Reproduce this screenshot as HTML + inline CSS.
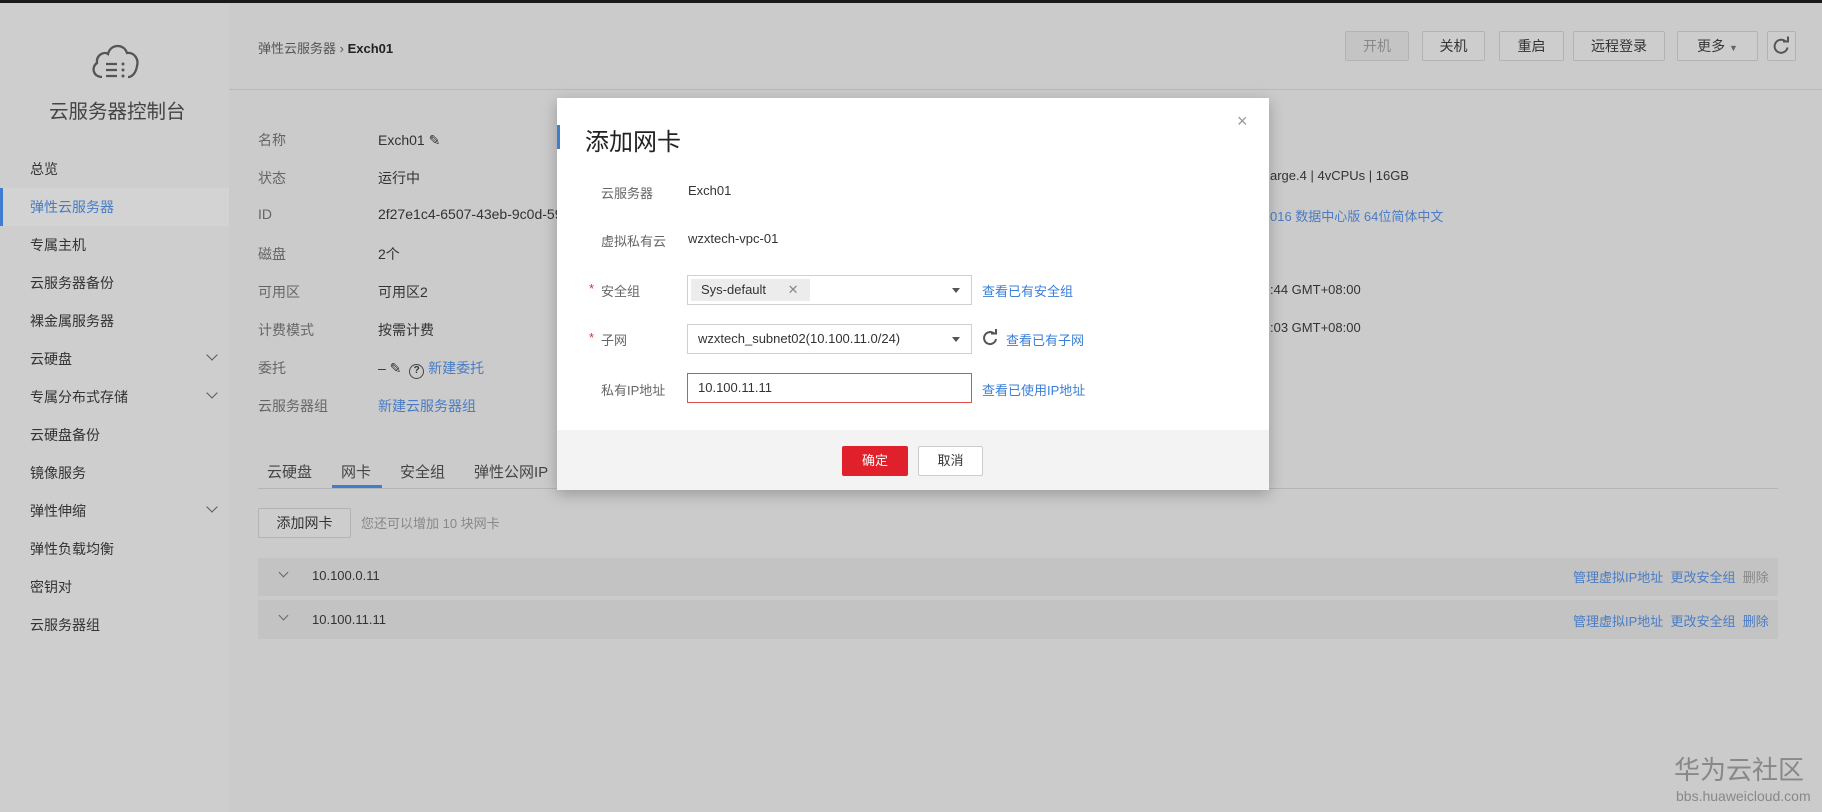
<!DOCTYPE html>
<html><head><meta charset="utf-8"><style>
*{margin:0;padding:0;box-sizing:border-box}
body{width:1822px;height:812px;overflow:hidden;background:#cbcbcb;font-family:"Liberation Sans","Noto Sans CJK SC",sans-serif;font-size:14px;color:#333;position:relative}
.a{position:absolute;white-space:nowrap}
.lbl{color:#666}
.link{color:#4a7cc4}
.btn{position:absolute;border:1px solid #b3b3b3;background:#cdcdcd;text-align:center;color:#333;font-size:14px;border-radius:2px}
.nav{position:absolute;left:30px;color:#333;font-size:14px}
.chev{position:absolute;left:208px;width:8px;height:8px;border-right:1.5px solid #555;border-bottom:1.5px solid #555;transform:rotate(45deg)}
.m{color:#333}
.inp{position:absolute;left:687px;width:285px;height:30px;border:1px solid #cfcfcf;background:#fff}
.tri{position:absolute;right:11px;top:12px;width:0;height:0;border-left:4px solid transparent;border-right:4px solid transparent;border-top:5px solid #555}
.mlink{color:#3a7fd8}
</style></head><body>
<div class="a" style="left:0;top:0;width:1822px;height:3px;background:#1a1a1a"></div>
<div class="a" style="left:0;top:3px;width:229px;height:809px;background:#cecece"></div>
<svg class="a" style="left:85px;top:37px" width="60" height="44" viewBox="0 0 54 44"><path d="M14 40 C5 40 3 30 9 26 C8 18 16 14 20 17 C22 7 36 6 39 16 C46 15 51 22 49 29 C48 36 44 40 40 40" fill="none" stroke="#555" stroke-width="2.3"/><path d="M18 27h11M18 33h11M18 39h11" stroke="#555" stroke-width="2.3"/><circle cx="35" cy="27" r="1.5" fill="#555"/><circle cx="35" cy="33" r="1.5" fill="#555"/><circle cx="35" cy="39" r="1.5" fill="#555"/></svg>
<div class="a" style="left:49px;top:95px;font-size:19.5px;color:#444">云服务器控制台</div>
<div class="nav" style="top:159px">总览</div>
<div class="a" style="left:0;top:188px;width:229px;height:38px;background:#d3d3d3"></div>
<div class="a" style="left:0;top:188px;width:3px;height:38px;background:#3f7dd0"></div>
<div class="nav" style="top:197px;color:#4a7cc4">弹性云服务器</div>
<div class="nav" style="top:235px">专属主机</div>
<div class="nav" style="top:273px">云服务器备份</div>
<div class="nav" style="top:311px">裸金属服务器</div>
<div class="nav" style="top:349px">云硬盘</div><div class="chev" style="top:351px"></div>
<div class="nav" style="top:387px">专属分布式存储</div><div class="chev" style="top:389px"></div>
<div class="nav" style="top:425px">云硬盘备份</div>
<div class="nav" style="top:463px">镜像服务</div>
<div class="nav" style="top:501px">弹性伸缩</div><div class="chev" style="top:503px"></div>
<div class="nav" style="top:539px">弹性负载均衡</div>
<div class="nav" style="top:577px">密钥对</div>
<div class="nav" style="top:615px">云服务器组</div>
<div class="a" style="left:258px;top:38px;font-size:13px;color:#555">弹性云服务器 › <b style="color:#222">Exch01</b></div>
<div class="a" style="left:229px;top:89px;width:1593px;height:1px;background:#b8b8b8"></div>
<div class="btn" style="left:1345px;top:31px;width:64px;height:30px;line-height:28px;color:#888;background:#c4c4c4">开机</div>
<div class="btn" style="left:1422px;top:31px;width:63px;height:30px;line-height:28px">关机</div>
<div class="btn" style="left:1499px;top:31px;width:65px;height:30px;line-height:28px">重启</div>
<div class="btn" style="left:1573px;top:31px;width:92px;height:30px;line-height:28px">远程登录</div>
<div class="btn" style="left:1677px;top:31px;width:81px;height:30px;line-height:28px">更多 <span style="font-size:9px;color:#666">▼</span></div>
<div class="btn" style="left:1767px;top:31px;width:29px;height:30px"><svg width="27" height="28" viewBox="0 0 27 28"><path d="M18 10 A6.5 6.5 0 1 0 19.5 15.5" fill="none" stroke="#555" stroke-width="2"/><path d="M15 9.5 L20 9.5 L20 4.5" fill="none" stroke="#555" stroke-width="2"/></svg></div>
<div class="a lbl" style="left:258px;top:130px">名称</div><div class="a m" style="left:378px;top:132px">Exch01 ✎</div>
<div class="a lbl" style="left:258px;top:168px">状态</div><div class="a m" style="left:378px;top:168px">运行中</div>
<div class="a lbl" style="left:258px;top:206px">ID</div><div class="a m" style="left:378px;top:206px">2f27e1c4-6507-43eb-9c0d-594</div>
<div class="a lbl" style="left:258px;top:244px">磁盘</div><div class="a m" style="left:378px;top:244px">2个</div>
<div class="a lbl" style="left:258px;top:282px">可用区</div><div class="a m" style="left:378px;top:282px">可用区2</div>
<div class="a lbl" style="left:258px;top:320px">计费模式</div><div class="a m" style="left:378px;top:320px">按需计费</div>
<div class="a lbl" style="left:258px;top:358px">委托</div><div class="a m" style="left:378px;top:358px">– ✎ &nbsp;<span style="display:inline-block;width:15px;height:15px;border:1.5px solid #444;border-radius:50%;font-size:10px;text-align:center;line-height:12px;font-weight:bold">?</span> <span class="link">新建委托</span></div>
<div class="a lbl" style="left:258px;top:396px">云服务器组</div><div class="a link" style="left:378px;top:396px">新建云服务器组</div>
<div class="a m" style="left:1270px;top:168px;font-size:13px">arge.4 | 4vCPUs | 16GB</div>
<div class="a link" style="left:1270px;top:206px;font-size:13px">016 数据中心版 64位简体中文</div>
<div class="a m" style="left:1270px;top:282px;font-size:13px">:44 GMT+08:00</div>
<div class="a m" style="left:1270px;top:320px;font-size:13px">:03 GMT+08:00</div>
<div class="a" style="left:267px;top:461px;font-size:15px;color:#444">云硬盘</div>
<div class="a" style="left:341px;top:461px;font-size:15px;color:#444">网卡</div>
<div class="a" style="left:332px;top:485px;width:50px;height:3px;background:#3f7dd0"></div>
<div class="a" style="left:400px;top:461px;font-size:15px;color:#444">安全组</div>
<div class="a" style="left:474px;top:461px;font-size:15px;color:#444">弹性公网IP</div>
<div class="a" style="left:258px;top:488px;width:1520px;height:1px;background:#b5b5b5"></div>
<div class="btn" style="left:258px;top:508px;width:93px;height:30px;line-height:28px">添加网卡</div>
<div class="a" style="left:361px;top:513px;color:#888;font-size:13px">您还可以增加 10 块网卡</div>
<div class="a" style="left:258px;top:558px;width:1520px;height:38px;background:#c3c3c3"></div>
<div class="a" style="left:258px;top:600px;width:1520px;height:39px;background:#c3c3c3"></div>
<div class="a" style="left:280px;top:569px;width:7px;height:7px;border-right:1.5px solid #666;border-bottom:1.5px solid #666;transform:rotate(45deg)"></div>
<div class="a" style="left:280px;top:612px;width:7px;height:7px;border-right:1.5px solid #666;border-bottom:1.5px solid #666;transform:rotate(45deg)"></div>
<div class="a m" style="left:312px;top:568px;font-size:13px">10.100.0.11</div>
<div class="a m" style="left:312px;top:612px;font-size:13px">10.100.11.11</div>
<div class="a link" style="left:1573px;top:567px;font-size:13px">管理虚拟IP地址 &nbsp;更改安全组 &nbsp;<span style="color:#888">删除</span></div>
<div class="a link" style="left:1573px;top:611px;font-size:13px">管理虚拟IP地址 &nbsp;更改安全组 &nbsp;删除</div>
<div class="a" style="left:1674px;top:750px;font-size:26px;color:#888;letter-spacing:0px">华为云社区</div>
<div class="a" style="left:1676px;top:788px;font-size:14px;color:#888">bbs.huaweicloud.com</div>
<div class="a" style="left:557px;top:98px;width:712px;height:392px;background:#fff;box-shadow:0 4px 14px rgba(0,0,0,.25)"></div>
<div class="a" style="left:557px;top:430px;width:712px;height:60px;background:#f3f3f3"></div>
<div class="a" style="left:557px;top:125px;width:3px;height:24px;background:#3f7dd0"></div>
<div class="a" style="left:585px;top:122px;font-size:24px;color:#222">添加网卡</div>
<div class="a" style="left:1237px;top:111px;font-size:18px;color:#999">×</div>
<div class="a lbl" style="left:601px;top:183px;font-size:13px">云服务器</div><div class="a m" style="left:688px;top:183px;font-size:13px">Exch01</div>
<div class="a lbl" style="left:601px;top:231px;font-size:13px">虚拟私有云</div><div class="a m" style="left:688px;top:231px;font-size:13px">wzxtech-vpc-01</div>
<div class="a" style="left:589px;top:281px;color:#e03030;font-size:13px">*</div><div class="a lbl" style="left:601px;top:281px;font-size:13px">安全组</div>
<div class="a" style="left:589px;top:330px;color:#e03030;font-size:13px">*</div><div class="a lbl" style="left:601px;top:330px;font-size:13px">子网</div>
<div class="a lbl" style="left:601px;top:380px;font-size:13px">私有IP地址</div>
<div class="inp" style="top:275px"><div class="a" style="left:3px;top:3px;width:119px;height:22px;background:#ececec;font-size:13px;line-height:22px;padding-left:10px;color:#333">Sys-default <span style="color:#888;margin-left:18px">✕</span></div><div class="tri"></div></div>
<div class="inp" style="top:324px"><div class="a" style="left:10px;top:6px;font-size:13px;color:#333">wzxtech_subnet02(10.100.11.0/24)</div><div class="tri"></div></div>
<div class="inp" style="top:373px;border-color:#e05050"><div class="a" style="left:10px;top:6px;font-size:13px;color:#333">10.100.11.11</div></div>
<div class="a mlink" style="left:982px;top:281px;font-size:13px">查看已有安全组</div>
<svg class="a" style="left:980px;top:328px" width="20" height="20" viewBox="0 0 20 20"><path d="M14.5 6 A6 6 0 1 0 16 11" fill="none" stroke="#555" stroke-width="2"/><path d="M11 5.5 L16 5.5 L16 1" fill="none" stroke="#555" stroke-width="2"/></svg>
<div class="a mlink" style="left:1006px;top:330px;font-size:13px">查看已有子网</div>
<div class="a mlink" style="left:982px;top:380px;font-size:13px">查看已使用IP地址</div>
<div class="a" style="left:842px;top:446px;width:66px;height:30px;background:#e0202a;color:#fff;text-align:center;line-height:30px;font-size:13px;border-radius:2px">确定</div>
<div class="a" style="left:918px;top:446px;width:65px;height:30px;background:#fff;border:1px solid #ccc;color:#333;text-align:center;line-height:28px;font-size:13px;border-radius:2px">取消</div>
</body></html>
